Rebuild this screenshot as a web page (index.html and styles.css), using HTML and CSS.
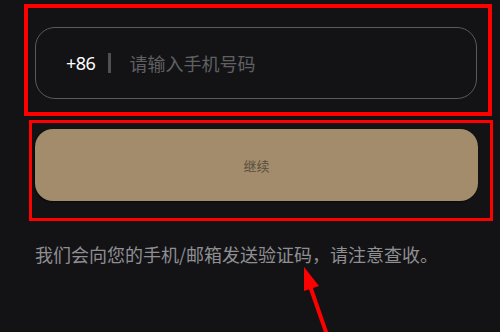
FILE: index.html
```html
<!DOCTYPE html>
<html lang="zh">
<head>
<meta charset="utf-8">
<link rel="stylesheet" href="styles.css">
</head>
<body>
<div class="page">
  <div class="frame frame-input">
    <div class="phone-field">
      <span class="code">+86</span>
      <span class="sep"></span>
      <span class="placeholder">请输入手机号码</span>
    </div>
  </div>
  <div class="frame frame-btn">
    <div class="btn">继续</div>
  </div>
  <p class="hint">我们会向您的手机/邮箱发送验证码，请注意查收。</p>
  <svg class="arrow" width="40" height="70" viewBox="0 0 40 70">
    <polygon points="14,2 14,26 29,21" fill="#ff0000"/>
    <line x1="19" y1="18" x2="37" y2="70" stroke="#ff0000" stroke-width="4"/>
  </svg>
</div>
</body>
</html>
```
FILE: styles.css
```css
html, body {
  margin: 0;
  padding: 0;
  background: #131316;
}
.page {
  position: relative;
  width: 500px;
  height: 332px;
  overflow: hidden;
  font-family: "Noto Sans", "Noto Sans CJK SC", sans-serif;
  padding-top: 4px;
  box-sizing: border-box;
}
.frame {
  box-sizing: border-box;
  border-style: solid;
  border-color: #ff0000;
}
.frame-input {
  margin-left: 24px;
  width: 468px;
  height: 112px;
  border-width: 4px;
  padding: 19px 11px 0 7px;
}
.phone-field {
  box-sizing: border-box;
  height: 72px;
  border: 1.5px solid #5a5a5c;
  border-radius: 20px;
  display: flex;
  align-items: center;
  padding-left: 30px;
  font-size: 18px;
}
.code {
  color: #ffffff;
  font-family: "Noto Sans", sans-serif;
  font-size: 18px;
  letter-spacing: -0.5px;
}
.sep {
  width: 3px;
  height: 20px;
  background: #505052;
  margin-left: 13px;
  margin-right: 18px;
}
.placeholder {
  color: #606063;
  font-family: "Noto Sans CJK SC", sans-serif;
}
.frame-btn {
  margin-top: 4px;
  margin-left: 29px;
  width: 464px;
  height: 101px;
  border-width: 3px;
  padding: 6px 12px 0 3px;
}
.btn {
  height: 72px;
  border-radius: 18px;
  background: #a38c6c;
  box-shadow: -1px 1px 2px rgba(0,0,0,0.5);
  display: flex;
  align-items: center;
  justify-content: center;
  color: #5a4e3e;
  font-size: 13px;
  font-family: "Noto Sans CJK SC", sans-serif;
}
.hint {
  margin: 21px 0 0 35px;
  color: #8f8f92;
  font-size: 18px;
  line-height: 24px;
  font-family: "Noto Sans CJK SC", sans-serif;
  white-space: nowrap;
}
.arrow {
  position: absolute;
  left: 290px;
  top: 265px;
}
```
